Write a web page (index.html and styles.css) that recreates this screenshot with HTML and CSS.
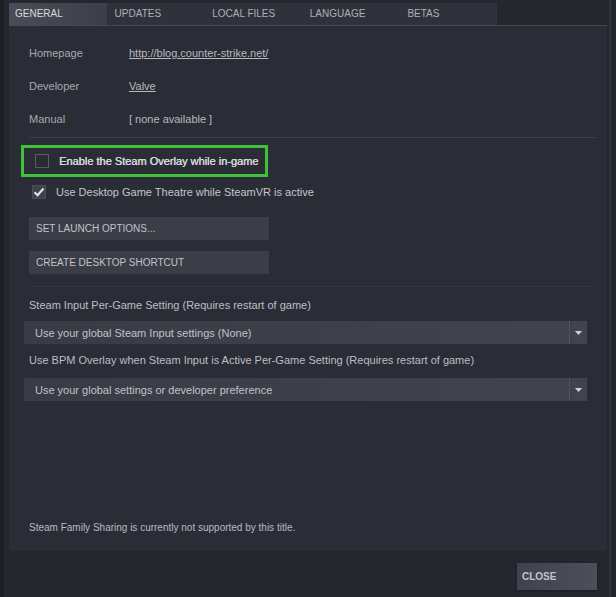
FILE: index.html
```html
<!DOCTYPE html>
<html lang="en">
<head>
    <meta charset="UTF-8">
    <title>Properties</title>
    <link rel="stylesheet" href="styles.css">
</head>
<body>
    <div class="window">
        <div class="tabs">
            <div class="tab active">GENERAL</div>
            <div class="tab">UPDATES</div>
            <div class="tab">LOCAL FILES</div>
            <div class="tab">LANGUAGE</div>
            <div class="tab">BETAS</div>
        </div>

        <div class="panel">
            <div class="info">
                <div class="info-row"><span class="label">Homepage</span><a class="value link">http://blog.counter-strike.net/</a></div>
                <div class="info-row"><span class="label">Developer</span><a class="value link">Valve</a></div>
                <div class="info-row"><span class="label">Manual</span><span class="value">[ none available ]</span></div>
            </div>

            <div class="options">
                <div class="highlight">
                    <label class="check"><span class="box"></span><span class="strong">Enable the Steam Overlay while in-game</span></label>
                </div>
                <label class="check second">
                    <span class="box checked">
                        <svg width="12" height="12" viewBox="0 0 12 12"><path d="M1.5 6.2 L4.6 9.2 L10.5 2.6" fill="none" stroke="#e4e5e8" stroke-width="2.2"/></svg>
                    </span>
                    <span>Use Desktop Game Theatre while SteamVR is active</span>
                </label>

                <button class="btn wide">SET LAUNCH OPTIONS...</button>
                <button class="btn wide">CREATE DESKTOP SHORTCUT</button>
            </div>

            <div class="settings">
                <p class="setting-title">Steam Input Per-Game Setting (Requires restart of game)</p>
                <div class="select">
                    <span>Use your global Steam Input settings (None)</span>
                    <span class="arrow"><svg width="7" height="4" viewBox="0 0 7 4"><path d="M0 0 H7 L3.5 4 Z" fill="#d0d1d5"/></svg></span>
                </div>
                <p class="setting-title">Use BPM Overlay when Steam Input is Active Per-Game Setting (Requires restart of game)</p>
                <div class="select">
                    <span>Use your global settings or developer preference</span>
                    <span class="arrow"><svg width="7" height="4" viewBox="0 0 7 4"><path d="M0 0 H7 L3.5 4 Z" fill="#d0d1d5"/></svg></span>
                </div>
            </div>

            <p class="sharing">Steam Family Sharing is currently not supported by this title.</p>
        </div>

        <div class="footer">
            <button class="btn close">CLOSE</button>
        </div>
    </div>
</body>
</html>
```

FILE: styles.css
```css
body {
    margin: 0;
    background: #25262e;
    font-family: 'Liberation Sans', Arial, sans-serif;
    font-size: 11px;
    color: #c3c5ca;
}
.window {
    width: 616px;
    height: 597px;
    box-sizing: border-box;
    border-left: 4px solid #1f2027;
    border-right: 5px solid #23242b;
    box-shadow: inset -2px 0 0 #31323b;
    padding-left: 5px;
}
.tabs {
    display: flex;
    padding-top: 3px;
    height: 22px;
}
.tab {
    width: 97.6px;
    padding-left: 8px;
    line-height: 22px;
    font-size: 10px;
    color: #aeb0b6;
    background: #30323b;
    box-sizing: border-box;
}
.tab.active {
    padding-left: 6px;
    background: linear-gradient(to right, #4a4c56, #3c3e48);
    color: #d8d9dc;
}
.panel {
    margin-right: 4px;
    height: 526px;
    box-sizing: border-box;
    background: #2b2d36;
    border-top: 1px solid #464853;
    padding: 0 11px 0 20px;
    display: flex;
    flex-direction: column;
}
.info {
    padding: 21px 0 11px;
    border-bottom: 1px solid #3b3d47;
    display: flex;
    flex-direction: column;
    gap: 20px;
}
.info-row {
    display: flex;
    line-height: 13px;
}
.label {
    width: 100px;
    color: #a7a9b0;
}
.value {
    color: #b7b9bf;
}
.link {
    text-decoration: underline;
}
.options {
    padding-top: 7px;
    border-bottom: 1px solid #34363f;
    padding-bottom: 12px;
}
.highlight {
    margin-left: -8px;
    width: 247px;
    height: 32px;
    box-sizing: border-box;
    border: 3px solid #3fc13a;
    padding-left: 8px;
    display: flex;
    align-items: center;
}
.check {
    display: flex;
    align-items: center;
    gap: 10px;
    white-space: nowrap;
}
.check.second {
    margin-top: 7px;
    height: 16px;
    padding-left: 3px;
}
.highlight .check {
    padding-left: 3px;
}
.box {
    width: 14px;
    height: 14px;
    box-sizing: border-box;
    border: 1px solid #5a5c66;
    background: #2a2c34;
    display: flex;
    align-items: center;
    justify-content: center;
}
.box.checked {
    background: #3e404a;
    border-color: #4c4e58;
}
.strong {
    color: #d6d7db;
    text-shadow: 0.4px 0 0 #d6d7db;
}
.btn {
    display: block;
    border: none;
    font-family: inherit;
    font-size: 10px;
    color: #c2c4c9;
    text-align: left;
    cursor: pointer;
}
.wide {
    width: 240px;
    height: 23px;
    margin-top: 17px;
    padding-left: 7px;
    background: #3b3d47;
}
.wide + .wide {
    margin-top: 11px;
}
.settings {
    padding-top: 12px;
}
.setting-title {
    margin: 0 0 9px;
    line-height: 13px;
    color: #bcbec3;
}
.select {
    margin-left: -5px;
    width: 563px;
    height: 23px;
    background: linear-gradient(to right, #393b45, #41434d);
    display: flex;
    align-items: center;
    justify-content: space-between;
    padding-left: 11px;
    box-sizing: border-box;
    margin-bottom: 10px;
    color: #c0c2c7;
}
.select + .setting-title {
    margin-bottom: 11px;
}
.arrow {
    width: 17px;
    height: 23px;
    border-left: 1px solid #54565f;
    box-shadow: inset 2px 0 0 #3e4049;
    display: flex;
    align-items: center;
    justify-content: center;
}
.sharing {
    margin: auto 0 18px;
    color: #b8bac0;
    font-size: 10px;
}
.footer {
    display: flex;
    justify-content: flex-end;
    padding: 12px 14px 0 0;
}
.close {
    width: 80px;
    height: 27px;
    padding-left: 5px;
    font-weight: bold;
    background: linear-gradient(to right, #40424d, #4c4e5a);
    box-shadow: 0 1px 2px #1a1b20;
}
```
